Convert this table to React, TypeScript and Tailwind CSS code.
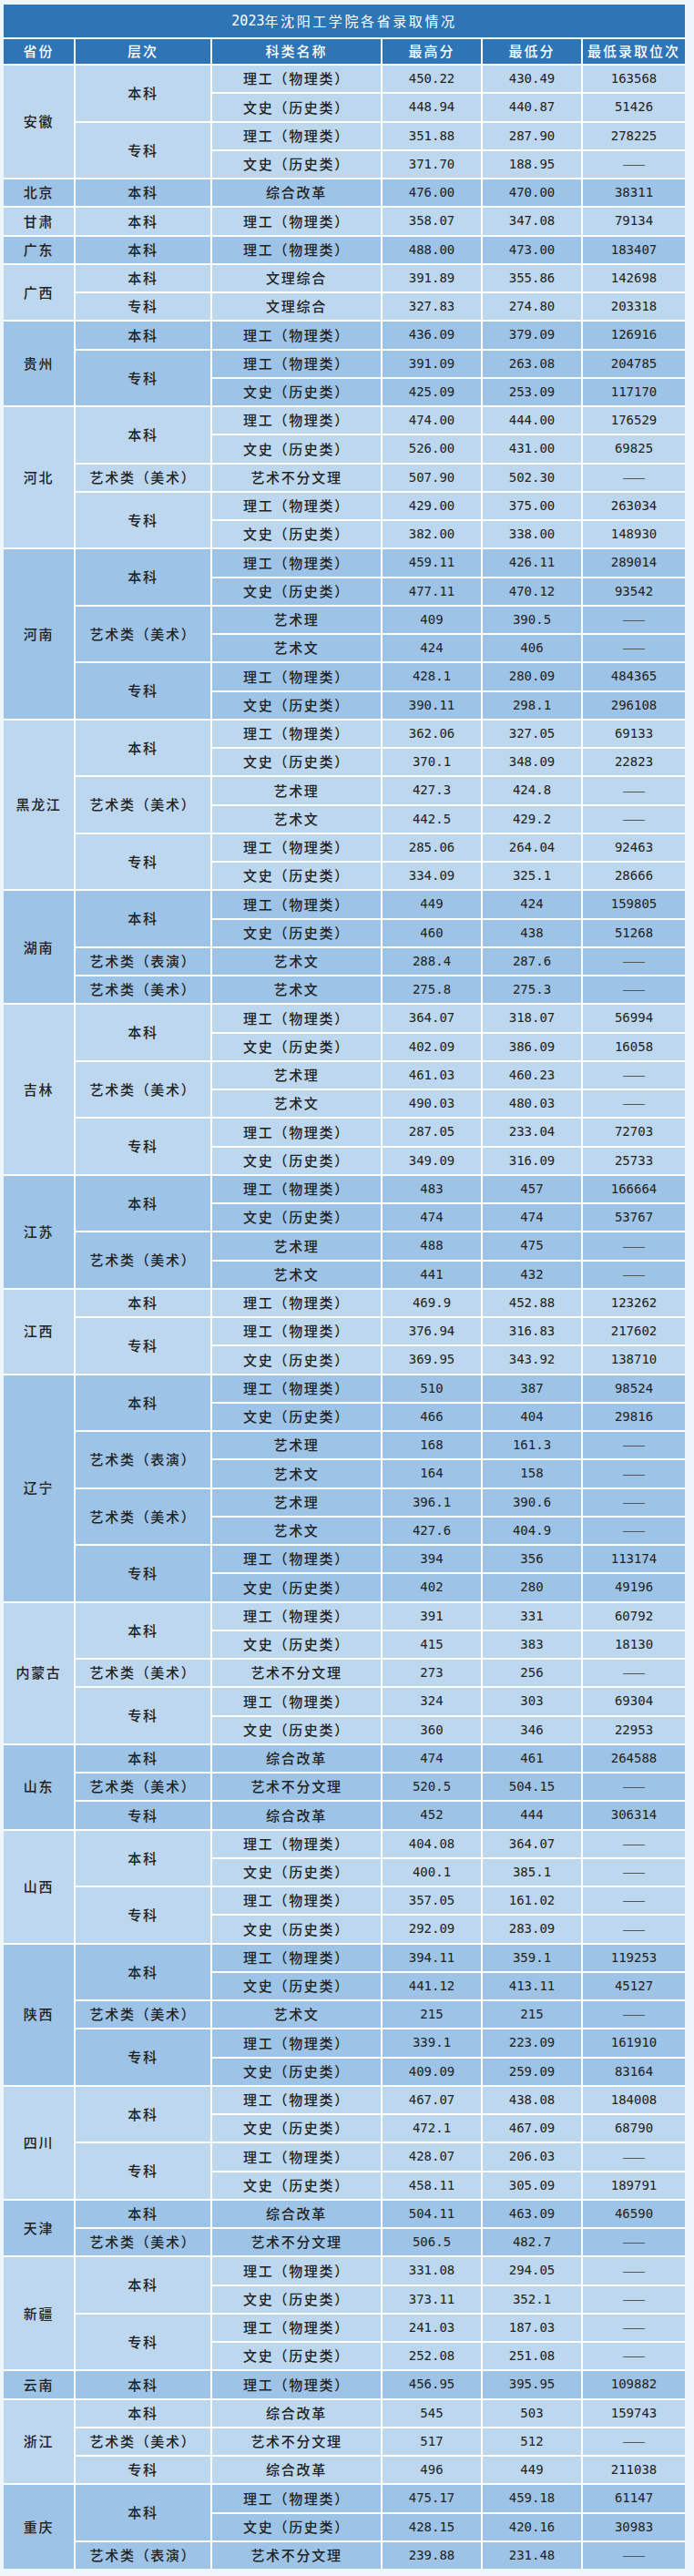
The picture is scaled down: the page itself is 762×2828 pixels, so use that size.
type Row = [string, string, string, string];

type Level = {
  name: string;
  rows: Row[];
};

type Province = {
  name: string;
  levels: Level[];
};

const D = "——";
const LI = "理工（物理类）";
const WEN = "文史（历史类）";
const ZH = "综合改革";
const BFL = "艺术不分文理";

// 2023年沈阳工学院各省录取情况
const provinces: Province[] = [
  {
    name: "安徽",
    levels: [
      { name: "本科", rows: [[LI, "450.22", "430.49", "163568"], [WEN, "448.94", "440.87", "51426"]] },
      { name: "专科", rows: [[LI, "351.88", "287.90", "278225"], [WEN, "371.70", "188.95", D]] },
    ],
  },
  { name: "北京", levels: [{ name: "本科", rows: [[ZH, "476.00", "470.00", "38311"]] }] },
  { name: "甘肃", levels: [{ name: "本科", rows: [[LI, "358.07", "347.08", "79134"]] }] },
  { name: "广东", levels: [{ name: "本科", rows: [[LI, "488.00", "473.00", "183407"]] }] },
  {
    name: "广西",
    levels: [
      { name: "本科", rows: [["文理综合", "391.89", "355.86", "142698"]] },
      { name: "专科", rows: [["文理综合", "327.83", "274.80", "203318"]] },
    ],
  },
  {
    name: "贵州",
    levels: [
      { name: "本科", rows: [[LI, "436.09", "379.09", "126916"]] },
      { name: "专科", rows: [[LI, "391.09", "263.08", "204785"], [WEN, "425.09", "253.09", "117170"]] },
    ],
  },
  {
    name: "河北",
    levels: [
      { name: "本科", rows: [[LI, "474.00", "444.00", "176529"], [WEN, "526.00", "431.00", "69825"]] },
      { name: "艺术类（美术）", rows: [[BFL, "507.90", "502.30", D]] },
      { name: "专科", rows: [[LI, "429.00", "375.00", "263034"], [WEN, "382.00", "338.00", "148930"]] },
    ],
  },
  {
    name: "河南",
    levels: [
      { name: "本科", rows: [[LI, "459.11", "426.11", "289014"], [WEN, "477.11", "470.12", "93542"]] },
      { name: "艺术类（美术）", rows: [["艺术理", "409", "390.5", D], ["艺术文", "424", "406", D]] },
      { name: "专科", rows: [[LI, "428.1", "280.09", "484365"], [WEN, "390.11", "298.1", "296108"]] },
    ],
  },
  {
    name: "黑龙江",
    levels: [
      { name: "本科", rows: [[LI, "362.06", "327.05", "69133"], [WEN, "370.1", "348.09", "22823"]] },
      { name: "艺术类（美术）", rows: [["艺术理", "427.3", "424.8", D], ["艺术文", "442.5", "429.2", D]] },
      { name: "专科", rows: [[LI, "285.06", "264.04", "92463"], [WEN, "334.09", "325.1", "28666"]] },
    ],
  },
  {
    name: "湖南",
    levels: [
      { name: "本科", rows: [[LI, "449", "424", "159805"], [WEN, "460", "438", "51268"]] },
      { name: "艺术类（表演）", rows: [["艺术文", "288.4", "287.6", D]] },
      { name: "艺术类（美术）", rows: [["艺术文", "275.8", "275.3", D]] },
    ],
  },
  {
    name: "吉林",
    levels: [
      { name: "本科", rows: [[LI, "364.07", "318.07", "56994"], [WEN, "402.09", "386.09", "16058"]] },
      { name: "艺术类（美术）", rows: [["艺术理", "461.03", "460.23", D], ["艺术文", "490.03", "480.03", D]] },
      { name: "专科", rows: [[LI, "287.05", "233.04", "72703"], [WEN, "349.09", "316.09", "25733"]] },
    ],
  },
  {
    name: "江苏",
    levels: [
      { name: "本科", rows: [[LI, "483", "457", "166664"], [WEN, "474", "474", "53767"]] },
      { name: "艺术类（美术）", rows: [["艺术理", "488", "475", D], ["艺术文", "441", "432", D]] },
    ],
  },
  {
    name: "江西",
    levels: [
      { name: "本科", rows: [[LI, "469.9", "452.88", "123262"]] },
      { name: "专科", rows: [[LI, "376.94", "316.83", "217602"], [WEN, "369.95", "343.92", "138710"]] },
    ],
  },
  {
    name: "辽宁",
    levels: [
      { name: "本科", rows: [[LI, "510", "387", "98524"], [WEN, "466", "404", "29816"]] },
      { name: "艺术类（表演）", rows: [["艺术理", "168", "161.3", D], ["艺术文", "164", "158", D]] },
      { name: "艺术类（美术）", rows: [["艺术理", "396.1", "390.6", D], ["艺术文", "427.6", "404.9", D]] },
      { name: "专科", rows: [[LI, "394", "356", "113174"], [WEN, "402", "280", "49196"]] },
    ],
  },
  {
    name: "内蒙古",
    levels: [
      { name: "本科", rows: [[LI, "391", "331", "60792"], [WEN, "415", "383", "18130"]] },
      { name: "艺术类（美术）", rows: [[BFL, "273", "256", D]] },
      { name: "专科", rows: [[LI, "324", "303", "69304"], [WEN, "360", "346", "22953"]] },
    ],
  },
  {
    name: "山东",
    levels: [
      { name: "本科", rows: [[ZH, "474", "461", "264588"]] },
      { name: "艺术类（美术）", rows: [[BFL, "520.5", "504.15", D]] },
      { name: "专科", rows: [[ZH, "452", "444", "306314"]] },
    ],
  },
  {
    name: "山西",
    levels: [
      { name: "本科", rows: [[LI, "404.08", "364.07", D], [WEN, "400.1", "385.1", D]] },
      { name: "专科", rows: [[LI, "357.05", "161.02", D], [WEN, "292.09", "283.09", D]] },
    ],
  },
  {
    name: "陕西",
    levels: [
      { name: "本科", rows: [[LI, "394.11", "359.1", "119253"], [WEN, "441.12", "413.11", "45127"]] },
      { name: "艺术类（美术）", rows: [["艺术文", "215", "215", D]] },
      { name: "专科", rows: [[LI, "339.1", "223.09", "161910"], [WEN, "409.09", "259.09", "83164"]] },
    ],
  },
  {
    name: "四川",
    levels: [
      { name: "本科", rows: [[LI, "467.07", "438.08", "184008"], [WEN, "472.1", "467.09", "68790"]] },
      { name: "专科", rows: [[LI, "428.07", "206.03", D], [WEN, "458.11", "305.09", "189791"]] },
    ],
  },
  {
    name: "天津",
    levels: [
      { name: "本科", rows: [[ZH, "504.11", "463.09", "46590"]] },
      { name: "艺术类（美术）", rows: [[BFL, "506.5", "482.7", D]] },
    ],
  },
  {
    name: "新疆",
    levels: [
      { name: "本科", rows: [[LI, "331.08", "294.05", D], [WEN, "373.11", "352.1", D]] },
      { name: "专科", rows: [[LI, "241.03", "187.03", D], [WEN, "252.08", "251.08", D]] },
    ],
  },
  { name: "云南", levels: [{ name: "本科", rows: [[LI, "456.95", "395.95", "109882"]] }] },
  {
    name: "浙江",
    levels: [
      { name: "本科", rows: [[ZH, "545", "503", "159743"]] },
      { name: "艺术类（美术）", rows: [[BFL, "517", "512", D]] },
      { name: "专科", rows: [[ZH, "496", "449", "211038"]] },
    ],
  },
  {
    name: "重庆",
    levels: [
      { name: "本科", rows: [[LI, "475.17", "459.18", "61147"], [WEN, "428.15", "420.16", "30983"]] },
      { name: "艺术类（表演）", rows: [[BFL, "239.88", "231.48", D]] },
    ],
  },
];

const SPAN: Record<number, string> = {
  1: "row-span-1",
  2: "row-span-2",
  3: "row-span-3",
  4: "row-span-4",
  5: "row-span-5",
  6: "row-span-6",
  7: "row-span-7",
  8: "row-span-8",
};

const headers = ["省份", "层次", "科类名称", "最高分", "最低分", "最低录取位次"];

const cjk = "font-['Noto_Sans_CJK_SC',sans-serif] text-[15px] tracking-[1.7px]";
const num = "font-['DejaVu_Sans_Mono','Noto_Sans_CJK_SC',monospace] text-[14px]";

function Cell({ bg, className = "", children }: { bg: string; className?: string; children: React.ReactNode }) {
  return (
    <div className={`flex items-center justify-center ${bg} ${className}`}>
      {children}
    </div>
  );
}

export default function App() {
  return (
    <div className="min-h-[2828px] bg-[#ecf6fc] pl-[4px] pt-[5px] text-[#222]">
      <div className="w-[748px] bg-white">
        {/* 标题 */}
        <div className="flex h-[36px] items-center justify-center bg-[#2e75b6] font-['Noto_Sans_CJK_SC',sans-serif] text-[15px] text-white">
          <span className="font-['DejaVu_Sans_Mono',monospace]">2023</span>
          <span className="tracking-[2.6px]">年沈阳工学院各省录取情况</span>
        </div>

        <div className="mt-[2px] grid grid-cols-[77px_148px_185px_108px_108px_112px] grid-rows-[27px_repeat(88,29.25px)] gap-[2px]">
          {headers.map((h) => (
            <div
              key={h}
              className="flex items-center justify-center bg-[#2e75b6] font-['Noto_Sans_CJK_SC',sans-serif] text-[15px] font-medium tracking-[2px] text-white"
            >
              {h}
            </div>
          ))}

          {provinces.map((p, pi) => {
            const bg = pi % 2 === 0 ? "bg-[#bdd7ee]" : "bg-[#9dc3e6]";
            const total = p.levels.reduce((t, l) => t + l.rows.length, 0);
            const cells: React.ReactNode[] = [];

            cells.push(
              <Cell key={`${p.name}-p`} bg={bg} className={`${SPAN[total]} ${cjk} font-medium`}>
                {p.name}
              </Cell>
            );

            p.levels.forEach((l, li) => {
              l.rows.forEach((r, ri) => {
                if (ri === 0) {
                  cells.push(
                    <Cell key={`${p.name}-${li}-l`} bg={bg} className={`${SPAN[l.rows.length]} ${cjk} font-medium`}>
                      {l.name}
                    </Cell>
                  );
                }
                const k = `${p.name}-${li}-${ri}`;
                cells.push(
                  <Cell key={`${k}-c`} bg={bg} className={`${cjk} font-medium`}>
                    {r[0]}
                  </Cell>,
                  <Cell key={`${k}-h`} bg={bg} className={num}>
                    {r[1]}
                  </Cell>,
                  <Cell key={`${k}-m`} bg={bg} className={num}>
                    {r[2]}
                  </Cell>,
                  <Cell key={`${k}-r`} bg={bg} className={r[3] === D ? "font-['Noto_Sans_CJK_SC',sans-serif] text-[15px] text-[#555]" : num}>
                    {r[3]}
                  </Cell>
                );
              });
            });

            return cells;
          })}
        </div>
      </div>
    </div>
  );
}
